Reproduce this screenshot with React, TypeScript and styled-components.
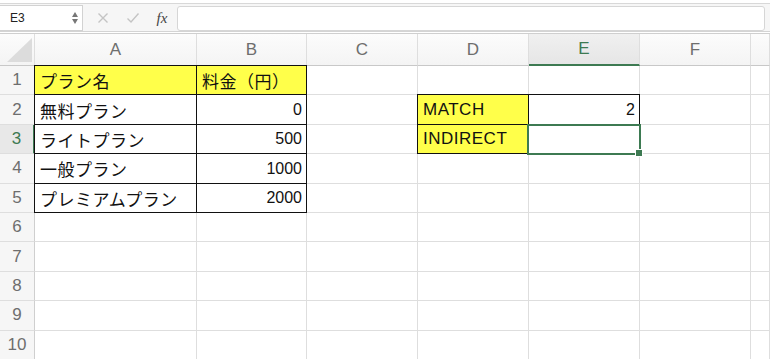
import React from 'react';
import styled, { createGlobalStyle, css } from 'styled-components';

const GlobalStyle = createGlobalStyle`
  html, body {
    margin: 0;
    padding: 0;
    background: #ffffff;
    overflow: hidden;
  }
  body {
    font-family: "Liberation Sans", "Noto Sans CJK JP", sans-serif;
  }
`;

const GREEN = '#3d7a52';
const GRID = '#dedede';

const Page = styled.div`
  width: 770px;
  height: 359px;
  display: flex;
  flex-direction: column;
  overflow: hidden;
`;

const Toolbar = styled.div`
  height: 29px;
  margin-top: 3px;
  border-top: 1px solid #d8d8d8;
  border-bottom: 1px solid #d4d4d4;
  background: #f6f6f6;
  display: flex;
  align-items: center;
  box-sizing: border-box;
  padding-top: 1px;
`;

const NameBox = styled.div`
  width: 83px;
  height: 26px;
  box-sizing: border-box;
  background: #fff;
  border: 1px solid #d2d2d2;
  border-left: none;
  display: flex;
  align-items: center;
  justify-content: space-between;
  padding: 0 4px 0 10px;
  font-size: 12px;
  color: #222;
`;

const Stepper = styled.div`
  display: flex;
  flex-direction: column;
  gap: 2px;
`;

const Arrow = styled.div<{ $up?: boolean }>`
  width: 0;
  height: 0;
  border-left: 3px solid transparent;
  border-right: 3px solid transparent;
  ${p => (p.$up ? css`border-bottom: 5px solid #777;` : css`border-top: 5px solid #777;`)}
`;

const ActionIcon = styled.div<{ $first?: boolean }>`
  width: 30px;
  margin-left: ${p => (p.$first ? '5px' : '0')};
  display: flex;
  align-items: center;
  justify-content: center;
`;

const Fx = styled.div`
  width: 28px;
  text-align: center;
  font-family: "Liberation Serif", serif;
  font-style: italic;
  font-size: 15px;
  color: #444;
`;

const FormulaInput = styled.div`
  flex: 1;
  height: 25px;
  margin: 0 5px 0 1px;
  box-sizing: border-box;
  background: #fff;
  border: 1px solid #d6d6d6;
  border-radius: 3px;
`;

const Sheet = styled.div`
  display: grid;
  grid-template-columns: 35px 162px 110px 111px 111px 111px 111px 19px;
  grid-template-rows: 32px repeat(10, 29.4px);
  border-top: 1px solid #cfcfcf;
  margin-top: 1px;
  font-size: 16px;
`;

const Corner = styled.div`
  background: linear-gradient(#fcfcfc, #f4f4f4);
  border-right: 1px solid ${GRID};
  border-bottom: 1px solid #c8c8c8;
  display: flex;
  align-items: flex-end;
  justify-content: flex-end;
  padding: 0 2px 3px 0;
`;

const ColHead = styled.div<{ $active?: boolean }>`
  background: ${p => (p.$active ? 'linear-gradient(#f0f0f0, #e6e6e6)' : 'linear-gradient(#fcfcfc, #f4f4f4)')};
  border-right: 1px solid ${GRID};
  border-bottom: ${p => (p.$active ? `2px solid ${GREEN}` : '1px solid #c8c8c8')};
  color: ${p => (p.$active ? GREEN : '#6e6e6e')};
  display: flex;
  align-items: center;
  justify-content: center;
  font-size: 17px;
`;

const RowHead = styled.div<{ $active?: boolean }>`
  background: ${p => (p.$active ? '#e8e8e8' : '#f6f6f6')};
  border-right: ${p => (p.$active ? `2px solid ${GREEN}` : '1px solid #cfcfcf')};
  border-bottom: 1px solid ${GRID};
  color: ${p => (p.$active ? GREEN : '#6e6e6e')};
  display: flex;
  align-items: center;
  justify-content: center;
  font-size: 17px;
`;

const Cell = styled.div<{ $fill?: string; $boxed?: boolean; $right?: boolean; $selected?: boolean }>`
  position: relative;
  background: ${p => p.$fill || '#fff'};
  border-right: 1px solid ${GRID};
  border-bottom: 1px solid ${GRID};
  display: flex;
  align-items: center;
  justify-content: ${p => (p.$right ? 'flex-end' : 'flex-start')};
  padding: 1px 4px 0 5px;
  color: #111;
  white-space: nowrap;
  font-size: ${p => (p.$right ? '16px' : '17px')};
  letter-spacing: ${p => (p.$right ? '0' : '0.5px')};

  ${p =>
    p.$boxed &&
    css`
      &::after {
        content: '';
        position: absolute;
        top: -1px;
        left: -1px;
        right: -1px;
        bottom: -1px;
        border: 1px solid #111;
        pointer-events: none;
      }
    `}

  ${p =>
    p.$selected &&
    css`
      &::before {
        content: '';
        position: absolute;
        top: -1px;
        left: -2px;
        right: -2px;
        bottom: -2px;
        border: 2px solid ${GREEN};
        z-index: 2;
        pointer-events: none;
      }
    `}
`;

const Handle = styled.span`
  position: absolute;
  right: -4px;
  bottom: -4px;
  width: 6px;
  height: 6px;
  background: ${GREEN};
  border: 1px solid #fff;
  z-index: 3;
`;

const YELLOW = '#ffff4a';
const cols = ['A', 'B', 'C', 'D', 'E', 'F', ''];

type CellDef = { text?: string; fill?: string; boxed?: boolean; right?: boolean; selected?: boolean };

const rows: Record<number, CellDef[]> = {
  1: [
    { text: 'プラン名', fill: YELLOW, boxed: true },
    { text: '料金（円）', fill: YELLOW, boxed: true },
  ],
  2: [
    { text: '無料プラン', boxed: true },
    { text: '0', boxed: true, right: true },
    {},
    { text: 'MATCH', fill: YELLOW, boxed: true },
    { text: '2', boxed: true, right: true },
  ],
  3: [
    { text: 'ライトプラン', boxed: true },
    { text: '500', boxed: true, right: true },
    {},
    { text: 'INDIRECT', fill: YELLOW, boxed: true },
    { boxed: true, selected: true },
  ],
  4: [
    { text: '一般プラン', boxed: true },
    { text: '1000', boxed: true, right: true },
  ],
  5: [
    { text: 'プレミアムプラン', boxed: true },
    { text: '2000', boxed: true, right: true },
  ],
};

const App: React.FC = () => {
  return (
    <>
      <GlobalStyle />
      <Page>
        <Toolbar>
          <NameBox>
            E3
            <Stepper>
              <Arrow $up />
              <Arrow />
            </Stepper>
          </NameBox>
          <ActionIcon $first>
            <svg width="12" height="12" viewBox="0 0 12 12">
              <path d="M1.5 1.5 L10.5 10.5 M10.5 1.5 L1.5 10.5" stroke="#c4c4c4" strokeWidth="1.4" />
            </svg>
          </ActionIcon>
          <ActionIcon>
            <svg width="14" height="12" viewBox="0 0 14 12">
              <path d="M1.5 6.5 L5 10 L12.5 1.5" stroke="#c4c4c4" strokeWidth="1.4" fill="none" />
            </svg>
          </ActionIcon>
          <Fx>fx</Fx>
          <FormulaInput />
        </Toolbar>
        <Sheet>
          <Corner>
            <svg width="25" height="24" viewBox="0 0 25 24">
              <path d="M25 0 L25 24 L0 24 Z" fill="#dcdcdc" />
            </svg>
          </Corner>
          {cols.map((c, i) => (
            <ColHead key={i} $active={c === 'E'}>
              {c}
            </ColHead>
          ))}
          {Array.from({ length: 10 }).map((_, r) => {
            const rowNo = r + 1;
            const defs = rows[rowNo] || [];
            return (
              <React.Fragment key={rowNo}>
                <RowHead $active={rowNo === 3}>{rowNo}</RowHead>
                {cols.map((_, ci) => {
                  const d = defs[ci] || {};
                  return (
                    <Cell key={ci} $fill={d.fill} $boxed={d.boxed} $right={d.right} $selected={d.selected}>
                      {d.text}
                      {d.selected && <Handle />}
                    </Cell>
                  );
                })}
              </React.Fragment>
            );
          })}
        </Sheet>
      </Page>
    </>
  );
};

export default App;
